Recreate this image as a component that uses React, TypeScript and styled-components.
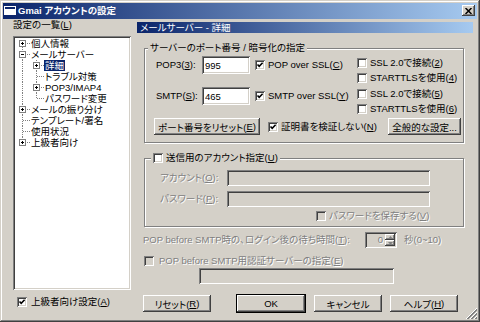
import React from "react";
import styled, { createGlobalStyle, css } from "styled-components";

const FACE = `"Liberation Sans", "Noto Sans CJK JP", sans-serif`;

const GlobalStyle = createGlobalStyle`
  html, body { margin: 0; padding: 0; background: #d4d0c8; }
  * { box-sizing: border-box; }
`;

const sunken = css`
  box-shadow: inset 1px 1px 0 #808080, inset -1px -1px 0 #ffffff,
    inset 2px 2px 0 #404040, inset -2px -2px 0 #d4d0c8;
`;

const raised = css`
  box-shadow: inset -1px -1px 0 #404040, inset 1px 1px 0 #ffffff,
    inset -2px -2px 0 #808080, inset 2px 2px 0 #d4d0c8;
`;

const Window = styled.div`
  position: relative;
  width: 480px;
  height: 322px;
  padding: 3px;
  display: flex;
  flex-direction: column;
  overflow: hidden;
  background: #d4d0c8;
  color: #000;
  font-family: ${FACE};
  font-size: 9.5px;
  font-feature-settings: "palt";
  box-shadow: inset -1px -1px 0 #404040, inset 1px 1px 0 #d4d0c8,
    inset -2px -2px 0 #808080, inset 2px 2px 0 #ffffff;
`;

const TitleBar = styled.div`
  height: 16px;
  flex: none;
  display: flex;
  align-items: flex-start;
  padding: 0 2px 0 1px;
  background: linear-gradient(to right, #0a246a, #a6caf0);
  color: #fff;
  font-weight: bold;
  font-size: 9.5px;
`;

const TitleIcon = styled.svg`
  margin-top: 3px;
  flex: none;
`;

const TitleText = styled.span`
  margin-left: 2px;
  line-height: 16px;
  white-space: nowrap;
`;

const CloseButton = styled.span`
  margin: 2px 0 0 auto;
  width: 13px;
  height: 11px;
  display: flex;
  align-items: center;
  justify-content: center;
  background: #d4d0c8;
  ${raised};
`;

const Body = styled.div`
  flex: 1;
  display: flex;
  gap: 6px;
  padding-left: 10px;
`;

const LeftPane = styled.div`
  width: 118px;
  flex: none;
  display: flex;
  flex-direction: column;
`;

const PaneLabel = styled.div`
  height: 12px;
  line-height: 12px;
  white-space: nowrap;
`;

const Tree = styled.div`
  margin-top: 5px;
  height: 254px;
  padding: 2px 0 0 3px;
  background: #fff;
  ${sunken};
`;

const TreeRow = styled.div`
  height: 11px;
  display: flex;
  align-items: center;
  white-space: nowrap;
`;

const GuideSvg = styled.svg`
  flex: none;
  display: block;
`;

const TreeLabel = styled.span<{ $selected?: boolean }>`
  height: 11px;
  line-height: 11px;
  padding: 0 1px;
  background: ${(p) => (p.$selected ? "#0a246a" : "transparent")};
  color: ${(p) => (p.$selected ? "#fff" : "#000")};
`;

const RightPane = styled.div`
  width: 336px;
  flex: none;
  display: flex;
  flex-direction: column;
`;

const PageHeader = styled.div`
  margin-top: 3px;
  height: 11px;
  line-height: 11px;
  padding-left: 3px;
  background: linear-gradient(to right, #0a246a, #a6caf0);
  color: #fff;
  white-space: nowrap;
`;

const Group = styled.div<{ $padBottom: number }>`
  margin: 15px 9px 0 7px;
  display: flex;
  flex-direction: column;
  padding-bottom: ${(p) => p.$padBottom}px;
  border: 1px solid #808080;
  box-shadow: 1px 1px 0 #fff, inset 1px 1px 0 #fff;
`;

const GroupTitle = styled.div<{ $indent: number }>`
  align-self: flex-start;
  margin: -7px 0 0 ${(p) => p.$indent}px;
  height: 12px;
  line-height: 12px;
  padding: 0 2px;
  display: flex;
  align-items: center;
  gap: 3px;
  background: #d4d0c8;
  white-space: nowrap;
`;

const PortBlock = styled.div<{ $first?: boolean }>`
  margin-top: ${(p) => (p.$first ? 1 : 0)}px;
  height: 31px;
  display: flex;
  align-items: flex-start;
  padding-left: 11px;
`;

const PortLabel = styled.span`
  width: 46px;
  margin-top: 1px;
  height: 18px;
  line-height: 18px;
  white-space: nowrap;
`;

const TextBox = styled.input<{ $w: number; $h: number }>`
  width: ${(p) => p.$w}px;
  height: ${(p) => p.$h}px;
  flex: none;
  margin: 0;
  padding: 0 3px;
  border: none;
  outline: none;
  font: inherit;
  color: #000;
  background: ${(p) => (p.disabled ? "#d4d0c8" : "#fff")};
  ${sunken};
`;

const PortInput = styled(TextBox)`
  margin-top: 1px;
`;

const SslCell = styled.div`
  width: 107px;
  height: 18px;
  margin-top: 1px;
  padding-left: 5px;
  display: flex;
  align-items: center;
`;

const OptionColumn = styled.div`
  display: flex;
  flex-direction: column;
`;

const OptionRow = styled.div`
  height: 15px;
  display: flex;
  align-items: center;
`;

const GroupButtons = styled.div`
  margin-top: 1px;
  height: 17px;
  display: flex;
  align-items: center;
  padding: 0 2px 0 9px;
`;

const CertOption = styled.div`
  margin-left: 8px;
  flex: 1;
  display: flex;
`;

const Button = styled.div<{ $w: number; $default?: boolean }>`
  width: ${(p) => p.$w}px;
  height: ${(p) => (p.$default ? 19 : 17)}px;
  flex: none;
  display: flex;
  align-items: center;
  justify-content: center;
  background: #d4d0c8;
  white-space: nowrap;
  border: ${(p) => (p.$default ? "1px solid #000" : "none")};
  ${raised};
`;

const CheckRow = styled.label<{ $gap?: number }>`
  display: flex;
  align-items: center;
  gap: ${(p) => p.$gap ?? 3}px;
  white-space: nowrap;
`;

const Box = styled.span<{ $disabled?: boolean }>`
  width: 10px;
  height: 10px;
  flex: none;
  display: block;
  background: ${(p) => (p.$disabled ? "#d4d0c8" : "#fff")};
  ${sunken};
`;

const Text = styled.span<{ $disabled?: boolean }>`
  line-height: 12px;
  white-space: nowrap;
  color: ${(p) => (p.$disabled ? "#808080" : "#000")};
  text-shadow: ${(p) => (p.$disabled ? "1px 1px 0 #fff" : "none")};
`;

const Key = styled.span`
  text-decoration: underline;
`;

const FieldRow = styled.div<{ $top: number }>`
  margin-top: ${(p) => p.$top}px;
  height: 16px;
  display: flex;
  align-items: center;
  padding-left: 15px;
`;

const FieldLabel = styled(Text)`
  width: 67px;
`;

const SaveRow = styled.div`
  margin-top: 3px;
  height: 12px;
  display: flex;
  align-items: center;
  padding-left: 171px;
`;

const WaitRow = styled.div`
  margin-top: 5px;
  height: 16px;
  display: flex;
  align-items: center;
  padding-left: 6px;
`;

const WaitLabel = styled(Text)`
  width: 222px;
  overflow: hidden;
`;

const Spin = styled.div`
  width: 32px;
  height: 16px;
  flex: none;
  display: flex;
  align-items: center;
  padding: 2px;
  background: #d4d0c8;
  ${sunken};
`;

const SpinValue = styled(Text)`
  flex: 1;
  text-align: right;
  padding-right: 2px;
`;

const SpinArrows = styled.div`
  width: 10px;
  height: 12px;
  display: flex;
  flex-direction: column;
`;

const SpinArrow = styled.div`
  flex: 1;
  display: flex;
  align-items: center;
  justify-content: center;
  background: #d4d0c8;
  ${raised};
`;

const Unit = styled(Text)`
  margin-left: 7px;
`;

const PopRow = styled.div`
  margin-top: 7px;
  height: 12px;
  display: flex;
  align-items: center;
  padding-left: 7px;
`;

const PopServer = styled.div`
  margin: 1px 0 0 62px;
  height: 16px;
  display: flex;
`;

const DialogButtons = styled.div`
  margin-top: 10px;
  height: 19px;
  display: flex;
  align-items: center;
  padding-left: 6px;
`;

const CommitButtons = styled.div`
  margin-left: 25px;
  display: flex;
  align-items: center;
  gap: 8px;
`;

const AdvancedRow = styled.div`
  margin-top: 6px;
  height: 11px;
  display: flex;
  align-items: center;
  padding-left: 4px;
`;

const Grip = styled.svg`
  position: absolute;
  right: 3px;
  bottom: 3px;
`;

type Line = "none" | "full" | "top" | "bottom";
type GuideSpec = { v: Line; h?: boolean; box?: "+" | "-" };

function Guide({ v, h, box }: GuideSpec) {
  const dot = { stroke: "#808080", strokeWidth: 1, strokeDasharray: "1 1" };
  return (
    <GuideSvg width="14" height="11" viewBox="0 0 14 11">
      {v === "full" && <line x1="6.5" y1="0" x2="6.5" y2="11" {...dot} />}
      {v === "top" && <line x1="6.5" y1="0" x2="6.5" y2="6" {...dot} />}
      {v === "bottom" && <line x1="6.5" y1="5" x2="6.5" y2="11" {...dot} />}
      {h && <line x1="7" y1="5.5" x2="14" y2="5.5" {...dot} />}
      {box && (
        <>
          <rect x="3.5" y="2.5" width="6" height="6" fill="#fff" stroke="#808080" />
          <line x1="5" y1="5.5" x2="8" y2="5.5" stroke="#000" />
          {box === "+" && <line x1="6.5" y1="4" x2="6.5" y2="7" stroke="#000" />}
        </>
      )}
    </GuideSvg>
  );
}

type TreeItem = { guides: GuideSpec[]; label: string; selected?: boolean };

const TREE: TreeItem[] = [
  { guides: [{ v: "bottom", h: true, box: "+" }], label: "個人情報" },
  { guides: [{ v: "full", h: true, box: "-" }], label: "メールサーバー" },
  { guides: [{ v: "full" }, { v: "full", h: true, box: "+" }], label: "詳細", selected: true },
  { guides: [{ v: "full" }, { v: "full", h: true }], label: "トラブル対策" },
  { guides: [{ v: "full" }, { v: "full", h: true, box: "+" }], label: "POP3/IMAP4" },
  { guides: [{ v: "full" }, { v: "top", h: true }], label: "パスワード変更" },
  { guides: [{ v: "full", h: true, box: "+" }], label: "メールの振り分け" },
  { guides: [{ v: "full", h: true }], label: "テンプレート/署名" },
  { guides: [{ v: "full", h: true }], label: "使用状況" },
  { guides: [{ v: "top", h: true, box: "+" }], label: "上級者向け" },
];

function Check({
  checked,
  disabled,
  gap,
  children,
}: {
  checked?: boolean;
  disabled?: boolean;
  gap?: number;
  children: React.ReactNode;
}) {
  return (
    <CheckRow $gap={gap}>
      <Box $disabled={disabled}>
        {checked && (
          <svg width="10" height="10" viewBox="0 0 10 10">
            <path d="M2.5 4.5 L4.2 6.4 L7.6 2.8" fill="none" stroke="#000" strokeWidth="1.6" />
          </svg>
        )}
      </Box>
      <Text $disabled={disabled}>{children}</Text>
    </CheckRow>
  );
}

function Arrow({ up }: { up?: boolean }) {
  return (
    <svg width="5" height="3" viewBox="0 0 5 3">
      <path d={up ? "M0 3 L2.5 0 L5 3 Z" : "M0 0 L2.5 3 L5 0 Z"} fill="#808080" />
    </svg>
  );
}

export default function App() {
  return (
    <>
      <GlobalStyle />
      <Window>
        <TitleBar>
          <TitleIcon width="12" height="9" viewBox="0 0 12 9">
            <rect x="0.5" y="0.5" width="11" height="8" fill="#fff" stroke="#fff" />
            <rect x="1" y="1" width="10" height="2" fill="#0a246a" />
          </TitleIcon>
          <TitleText>Gmai アカウントの設定</TitleText>
          <CloseButton>
            <svg width="7" height="6" viewBox="0 0 7 6">
              <path d="M0.5 0 L6.5 6 M6.5 0 L0.5 6" stroke="#000" strokeWidth="1.5" />
            </svg>
          </CloseButton>
        </TitleBar>

        <Body>
          <LeftPane>
            <PaneLabel>
              設定の一覧(<Key>L</Key>)
            </PaneLabel>
            <Tree>
              {TREE.map((item) => (
                <TreeRow key={item.label}>
                  {item.guides.map((g, i) => (
                    <Guide key={i} {...g} />
                  ))}
                  <TreeLabel $selected={item.selected}>{item.label}</TreeLabel>
                </TreeRow>
              ))}
            </Tree>
            <AdvancedRow>
              <Check checked gap={4}>
                上級者向け設定(<Key>A</Key>)
              </Check>
            </AdvancedRow>
          </LeftPane>

          <RightPane>
            <PageHeader>メールサーバー - 詳細</PageHeader>

            <Group $padBottom={7}>
              <GroupTitle $indent={3}>サーバーのポート番号 / 暗号化の指定</GroupTitle>
              <PortBlock $first>
                <PortLabel>
                  POP3(<Key>3</Key>):
                </PortLabel>
                <PortInput $w={48} $h={18} readOnly value="995" />
                <SslCell>
                  <Check checked>
                    POP over SSL(<Key>C</Key>)
                  </Check>
                </SslCell>
                <OptionColumn>
                  <OptionRow>
                    <Check>
                      SSL 2.0で接続(<Key>2</Key>)
                    </Check>
                  </OptionRow>
                  <OptionRow>
                    <Check>
                      STARTTLSを使用(<Key>4</Key>)
                    </Check>
                  </OptionRow>
                </OptionColumn>
              </PortBlock>
              <PortBlock>
                <PortLabel>
                  SMTP(<Key>S</Key>):
                </PortLabel>
                <PortInput $w={48} $h={18} readOnly value="465" />
                <SslCell>
                  <Check checked>
                    SMTP over SSL(<Key>Y</Key>)
                  </Check>
                </SslCell>
                <OptionColumn>
                  <OptionRow>
                    <Check>
                      SSL 2.0で接続(<Key>5</Key>)
                    </Check>
                  </OptionRow>
                  <OptionRow>
                    <Check>
                      STARTTLSを使用(<Key>6</Key>)
                    </Check>
                  </OptionRow>
                </OptionColumn>
              </PortBlock>
              <GroupButtons>
                <Button $w={106}>
                  ポート番号をリセット(<Key>E</Key>)
                </Button>
                <CertOption>
                  <Check checked>
                    証明書を検証しない(<Key>N</Key>)
                  </Check>
                </CertOption>
                <Button $w={73}>全般的な設定...</Button>
              </GroupButtons>
            </Group>

            <Group $padBottom={4}>
              <GroupTitle $indent={6}>
                <Box />
                <Text>
                  送信用のアカウント指定(<Key>U</Key>)
                </Text>
              </GroupTitle>
              <FieldRow $top={6}>
                <FieldLabel $disabled>
                  アカウント(<Key>O</Key>):
                </FieldLabel>
                <TextBox $w={203} $h={16} disabled readOnly value="" />
              </FieldRow>
              <FieldRow $top={5}>
                <FieldLabel $disabled>
                  パスワード(<Key>P</Key>):
                </FieldLabel>
                <TextBox $w={203} $h={16} disabled readOnly value="" />
              </FieldRow>
              <SaveRow>
                <Check disabled>
                  パスワードを保存する(<Key>V</Key>)
                </Check>
              </SaveRow>
            </Group>

            <WaitRow>
              <WaitLabel $disabled>
                POP before SMTP時の、ログイン後の待ち時間(<Key>T</Key>):
              </WaitLabel>
              <Spin>
                <SpinValue $disabled>0</SpinValue>
                <SpinArrows>
                  <SpinArrow>
                    <Arrow up />
                  </SpinArrow>
                  <SpinArrow>
                    <Arrow />
                  </SpinArrow>
                </SpinArrows>
              </Spin>
              <Unit $disabled>秒(0~10)</Unit>
            </WaitRow>

            <PopRow>
              <Check disabled gap={5}>
                POP before SMTP用認証サーバーの指定(<Key>E</Key>)
              </Check>
            </PopRow>
            <PopServer>
              <TextBox $w={195} $h={16} disabled readOnly value="" />
            </PopServer>

            <DialogButtons>
              <Button $w={68}>
                リセット(<Key>R</Key>)
              </Button>
              <CommitButtons>
                <Button $w={70} $default>
                  OK
                </Button>
                <Button $w={68}>キャンセル</Button>
                <Button $w={68}>
                  ヘルプ(<Key>H</Key>)
                </Button>
              </CommitButtons>
            </DialogButtons>
          </RightPane>
        </Body>

        <Grip width="11" height="11" viewBox="0 0 11 11">
          {[0, 4, 8].map((o) => (
            <g key={o}>
              <line x1={11} y1={o} x2={o} y2={11} stroke="#fff" />
              <line x1={11} y1={o + 1} x2={o + 1} y2={11} stroke="#808080" />
              <line x1={11} y1={o + 2} x2={o + 2} y2={11} stroke="#808080" />
            </g>
          ))}
        </Grip>
      </Window>
    </>
  );
}
